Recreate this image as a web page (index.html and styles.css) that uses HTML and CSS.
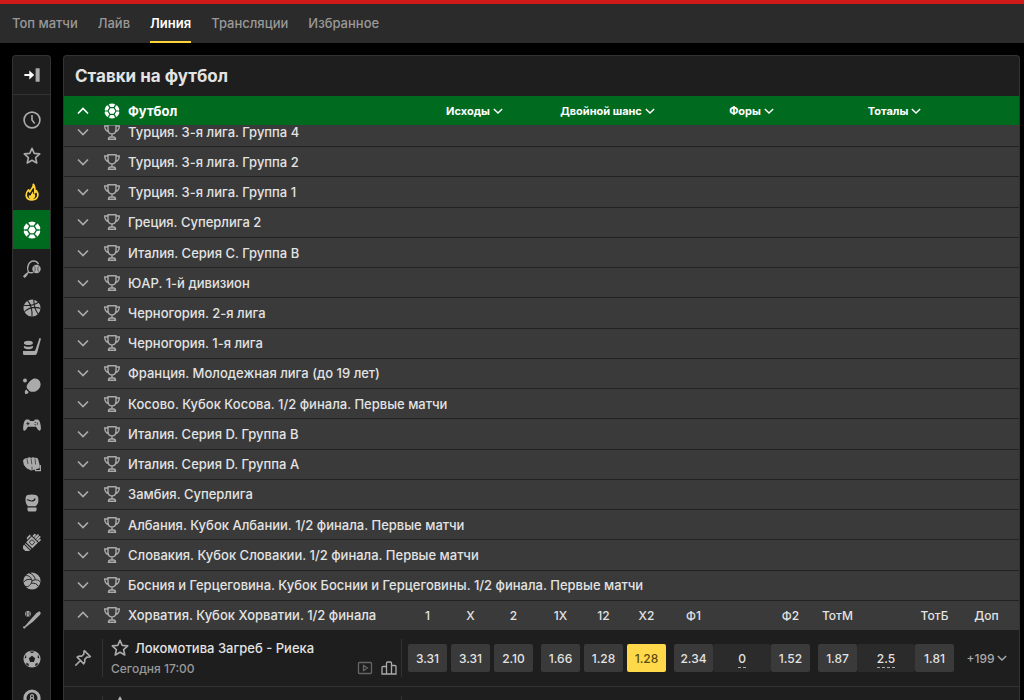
FILE: index.html
```html
<!DOCTYPE html>
<html lang="ru">
<head>
    <meta charset="UTF-8">
    <meta name="viewport" content="width=device-width, initial-scale=1.0">
    <title>Ставки на футбол</title>
    <link rel="stylesheet" href="styles.css">
</head>
<body>

<!-- Icons -->
<svg class="sprite" aria-hidden="true">
    <symbol id="down" viewBox="0 0 12 12"><path d="M1 3.500l5 5 5-5" fill="none" stroke="currentColor" stroke-width="1.700"/></symbol>
    <symbol id="up" viewBox="0 0 12 12"><path d="M1 8.500l5-5 5 5" fill="none" stroke="currentColor" stroke-width="1.700"/></symbol>
    <symbol id="cup" viewBox="0 0 16 16">
        <path d="M4 .8h8v4.500c0 2.800-1.500 4.700-4 4.700S4 8.100 4 5.300zM4 2H.7c0 3 1 4.800 3.800 5.500M12 2h3.300c0 3-1 4.800-3.800 5.500M8 10v3M4.500 15.300c0-1.600.8-2.300 2-2.300h3c1.200 0 2 .7 2 2.300z" fill="none" stroke="currentColor" stroke-width="1.400"/>
    </symbol>
    <symbol id="star" viewBox="0 0 20 20"><path d="M10 1.500l2.500 5.600 6.100.6-4.600 4.100 1.300 6L10 14.700l-5.300 3.100 1.300-6-4.600-4.100 6.100-.6z" fill="none" stroke="currentColor" stroke-width="1.800" stroke-linejoin="round"/></symbol>
    <symbol id="ball" viewBox="0 0 20 20">
        <circle cx="10" cy="10" r="9.500" fill="#fff"/>
        <path d="M7.500 5.700h5L15 10l-2.500 4.300h-5L5 10zM7.500 5.700L5.800 3M12.500 5.700L14.200 3M15 10h3M12.500 14.300l1.700 2.700M7.500 14.300L5.800 17M5 10H2" fill="none" stroke="#006b1f" stroke-width="1.500"/>
        <path d="M4 1l3 1-2 2.500zM16 1l-3 1 2 2.500zM20 8l-2.300 2 2.300 2zM16 19l-3-1 2-2.500zM4 19l3-1-2-2.500zM0 8l2.300 2L0 12z" fill="#006b1f"/>
    </symbol>
    <symbol id="collapse" viewBox="0 0 20 20">
        <path d="M1.500 8.800h5.500V5l5.500 5L7 15v-3.800H1.500z" fill="#fff"/><path d="M14 2.500h4.500v15H14z" fill="#aaa"/>
    </symbol>
    <symbol id="clock" viewBox="0 0 20 20"><g fill="none" stroke="currentColor" stroke-width="1.800"><circle cx="10" cy="10" r="8.800"/><path d="M10 4.500V10l3 3.800"/></g></symbol>
    <symbol id="fire" viewBox="0 0 20 20">
        <path d="M11.500 1.500c.5 3-1.500 4.300-2.800 6.200-.7 1-1 1.600-1.100 2.300C6.700 9.300 6.300 8.500 6.200 7.500 4.300 9.500 3.200 11.300 3.500 13.700c.4 3 3 5 6.500 5s6.300-2 6.500-5.300c.1-2-.8-3.700-1.800-5-.3 1.200-.8 2-1.700 2.600.5-3.800.5-6.800-1.500-9.500z" fill="none" stroke="currentColor" stroke-width="1.900" stroke-linejoin="round"/>
        <path d="M11 9.500c0 2 .4 2.800 2.300 3 .8 3-.8 5.500-3.300 5.500-2.800 0-4.200-2-3.500-4.500.9.600 1.600.4 2.200-.3.700-1 1.200-2.700 2.300-3.700z" fill="currentColor"/>
    </symbol>
    <symbol id="tennis" viewBox="0 0 20 20">
        <path d="M6 13.500C3.500 8 6.500 1.500 11.500 1.200c3-.1 4.800 1.300 5.600 3.600M6 13.500c2 1 3.500 1 5.500.3M6 13.500L1 19" fill="none" stroke="currentColor" stroke-width="1.600"/><path d="M0 18l3.500-3.500 1.800 1.800L2 20z" fill="currentColor"/>
        <circle cx="15" cy="10" r="4.700" fill="currentColor"/><path d="M12.500 7c1.500 2 1.500 4 0 6M17.500 7c-1.500 2-1.500 4 0 6" fill="none" stroke="#1e1e1e" stroke-width=".6"/>
    </symbol>
    <symbol id="basket" viewBox="0 0 20 20">
        <circle cx="10" cy="10" r="9.500" fill="currentColor"/>
        <path d="M5 1.500c4 5 5.500 11 5 18M1 7c7 .8 13-.5 17-4M1.500 14C7 9.500 13 8 19.500 10.500M12 .8C12 7 14 13 17 17" fill="none" stroke="#1e1e1e" stroke-width="1.200"/>
    </symbol>
    <symbol id="hockey" viewBox="0 0 20 20">
        <path d="M18.300 0l1.700.5-4.200 15.800c-.4 1.700-1.300 2.700-3.300 2.700H1.500C.6 19 0 18.400 0 17.500V14.500h11.500c1.300 0 2-.5 2.500-1.700z" fill="currentColor"/>
        <path d="M1 5.500C1 4 3 3 6 3s5 1 5 2.500-2 2.300-5 2.300-5-.8-5-2.300zM1 8.500c2.500 1.500 7.500 1.500 10 0v2c-.5 1.300-2.500 2-5 2s-4.500-.7-5-2z" fill="currentColor"/>
    </symbol>
    <symbol id="pingpong" viewBox="0 0 20 20">
        <path d="M8.500 4C12 .5 16.500 1.300 18.500 4.500c2 3.500 1 7.500-2 10-2.500 2.200-5 2.200-7.500 1.800-1.500-.2-2.200-1.500-3.300-2.500S3.500 11.500 4.300 9.500C5.200 7.500 6.500 5.800 8.500 4z" fill="currentColor"/>
        <circle cx="2.200" cy="3.800" r="2.200" fill="currentColor"/><path d="M3.500 14l2.800 2.800c-.5 1.700-2 2.700-3.700 2-1-1-.8-3.500.9-4.800z" fill="currentColor"/>
    </symbol>
    <symbol id="gamepad" viewBox="0 0 20 20">
        <path d="M4 4h2.800l1 1.500h4.400l1-1.500H16c1.700 0 2.600 1.800 3.300 5 .8 3.500 1 7-.7 7.300-1.500.3-2.500-1.800-4-4.300H5.400c-1.500 2.500-2.500 4.600-4 4.300C-.3 16 0 12.500.7 9 1.400 5.800 2.300 4 4 4z" fill="currentColor"/>
        <path d="M5.500 6.700v3.600M3.700 8.500h3.600" stroke="#1e1e1e" stroke-width="1"/><circle cx="14.500" cy="8.500" r="1.700" fill="none" stroke="#1e1e1e" stroke-width="1" stroke-dasharray="1.500 1.200"/>
    </symbol>
    <symbol id="fist" viewBox="0 0 20 20">
        <path d="M0 6.500C1 4 3 3 4.500 4 6 2.300 8 2.300 9 3.300c1.500-1.300 3.500-1 4.300 0 2-.6 3.300.2 3.700 2L18.500 11v3.500l-3.500 1.200-6 1.500-5-2.500L1 11z" fill="currentColor"/>
        <path d="M4.500 4.500L5.500 10M9 3.800l.8 6.500M13.300 4l.7 6.500M10 13v3.500" fill="none" stroke="#1e1e1e" stroke-width=".7"/>
        <path d="M19.300 11v6.300H14l-.5-1.500" fill="none" stroke="currentColor" stroke-width="1.300"/>
    </symbol>
    <symbol id="boxing" viewBox="0 0 20 20">
        <path d="M5 1.200C8 .3 12 .3 15 1.500c2 1 2.300 4 2 7-.3 2-1.500 3.800-2.800 5H5.500C3.500 11.500 2.700 9 2.800 6c0-2.500.7-4.200 2.200-4.800zM5 15h10v3c-.3 1-1 1.500-2 1.500H7c-1 0-1.700-.5-2-1.500z" fill="currentColor"/>
        <path d="M4.500 6.500c1.500-.5 2.500 1.300 5 1.300S13 7 13.500 5" fill="none" stroke="#1e1e1e" stroke-width="1.300"/>
    </symbol>
    <symbol id="glove" viewBox="0 0 20 20">
        <g fill="currentColor" transform="rotate(45 10 10)">
            <path d="M6 16h9v1.300H6zM6 18.300h9v4H6zM5.500 6h9.800v8.700H5.500z"/><rect x="5.500" y="1" width="2.200" height="4" rx="1"/><rect x="8.200" y="-1" width="2.200" height="6" rx="1"/><rect x="10.900" y="-1" width="2.200" height="6" rx="1"/><rect x="13.500" y="1" width="2" height="4" rx="1"/><path d="M2.500 5.500l2 1v6l-2-2z"/>
        </g>
        <rect x="8" y="8" width="4.500" height="4.500" rx="1" fill="none" stroke="#1e1e1e" stroke-width="1" transform="rotate(45 10 10)"/>
    </symbol>
    <symbol id="volley" viewBox="0 0 20 20">
        <circle cx="10" cy="10" r="9.500" fill="currentColor"/>
        <path d="M10 10C9.500 6 6.500 3.500 2.500 4M10 10c3-2 7-2 9.500 1.500M10 10c-1 4-4 7.500-8 6M7 1c4 1.500 6.500 4.500 6.500 7.500M17 16c-1.500-3-4-4-7.800-3.500M1 11c2-2.500 5-3.300 8.300-2.700" fill="none" stroke="#1e1e1e" stroke-width="1.100"/>
    </symbol>
    <symbol id="baseball" viewBox="0 0 20 20">
        <path d="M17.200.8c1.500-.6 3 .8 2.200 2.500-.5 1-1.400 2-2.400 2.900L11 12l-8.300 6.300c.1 1-.9 1.700-1.700 1.200-1-.5-1.300-1.800-.5-2.300.5-.4.800-.3 1.200-.1L8.500 9.500l5.200-6c1-1.200 2.200-2.200 3.500-2.700z" fill="currentColor"/>
        <circle cx="5.500" cy="3" r="3.200" fill="currentColor"/><path d="M3.500.5c1 1.500 1 3.500 0 5M7.500.5c-1 1.500-1 3.500 0 5" fill="none" stroke="#1e1e1e" stroke-width=".9"/>
    </symbol>
    <symbol id="soccer" viewBox="0 0 20 20">
        <circle cx="10" cy="10" r="9.500" fill="currentColor"/>
        <path d="M10 6.500l3.500 2.600-1.300 4.200H7.800L6.500 9.100zM7 1.800h6l-3 1.800zM16.800 5l1.500 4.500-2.100-1zM3.200 5L1.700 9.500l2.100-1zM16.500 16l-3 2 .3-2.700 2.200-1zM3.500 16l3 2-.3-2.700-2.200-1z" fill="#1e1e1e"/>
    </symbol>
    <symbol id="pool" viewBox="0 0 20 20">
        <g fill="none" stroke="currentColor"><circle cx="10" cy="10" r="7.800" stroke-width="3.500"/><circle cx="10" cy="8" r="1.700" stroke-width="1.300"/><circle cx="10" cy="11.800" r="2" stroke-width="1.300"/></g>
    </symbol>
    <symbol id="pin" viewBox="0 0 20 20"><path d="M11.500 1.800l6.700 6.700c-1.500.8-2.700.8-3.800.5l-2.500 2.500c.5 2 .2 3.500-1 5L3.500 9.100c1.500-1.200 3-1.500 5-1L11 5.600c-.3-1.100-.3-2.300.5-3.800zM7.200 12.800L1.500 18.500" fill="none" stroke="currentColor" stroke-width="1.800" stroke-linejoin="round"/></symbol>
    <symbol id="play" viewBox="0 0 16 16"><path d="M2.500 2.500h11c.6 0 1 .4 1 1v9c0 .6-.4 1-1 1h-11c-.6 0-1-.4-1-1v-9c0-.6.4-1 1-1zM6.500 5.500v5l4-2.500z" fill="none" stroke="currentColor" stroke-width="1.300"/></symbol>
    <symbol id="stats" viewBox="0 0 16 16"><path d="M1 14V7.500c0-.6.4-1 1-1h3.500V14zM5.500 14V3c0-.6.4-1 1-1h3c.6 0 1 .4 1 1v11zM10.500 14V5.500H14c.6 0 1 .4 1 1V14z" fill="none" stroke="currentColor" stroke-width="1.300"/></symbol>
</svg>

<header class="topbar">
    <nav class="tabs">
        <a href="#">Топ матчи</a>
        <a href="#">Лайв</a>
        <a href="#" class="active">Линия</a>
        <a href="#">Трансляции</a>
        <a href="#">Избранное</a>
    </nav>
</header>

<div class="layout">
    <aside class="sidebar">
        <button class="collapse" type="button" aria-label="Свернуть"><svg><use href="#collapse"/></svg></button>
        <nav class="quick">
            <a href="#" aria-label="Время"><svg><use href="#clock"/></svg></a>
            <a href="#" aria-label="Избранное"><svg><use href="#star"/></svg></a>
            <a href="#" class="hot" aria-label="Горячее"><svg><use href="#fire"/></svg></a>
        </nav>
        <nav class="sports">
            <a href="#" class="active" aria-label="Футбол"><svg><use href="#ball"/></svg></a>
            <a href="#" aria-label="Теннис"><svg><use href="#tennis"/></svg></a>
            <a href="#" aria-label="Баскетбол"><svg><use href="#basket"/></svg></a>
            <a href="#" aria-label="Хоккей"><svg><use href="#hockey"/></svg></a>
            <a href="#" aria-label="Настольный теннис"><svg><use href="#pingpong"/></svg></a>
            <a href="#" aria-label="Киберспорт"><svg><use href="#gamepad"/></svg></a>
            <a href="#" aria-label="Единоборства"><svg><use href="#fist"/></svg></a>
            <a href="#" aria-label="Бокс"><svg><use href="#boxing"/></svg></a>
            <a href="#" aria-label="Гандбол"><svg><use href="#glove"/></svg></a>
            <a href="#" aria-label="Волейбол"><svg><use href="#volley"/></svg></a>
            <a href="#" aria-label="Бейсбол"><svg><use href="#baseball"/></svg></a>
            <a href="#" aria-label="Футзал"><svg><use href="#soccer"/></svg></a>
            <a href="#" aria-label="Бильярд"><svg><use href="#pool"/></svg></a>
        </nav>
    </aside>

    <main class="panel">
        <h1>Ставки на футбол</h1>
        <div class="sport-head">
            <button class="sport-name" type="button"><svg class="arrow"><use href="#up"/></svg><svg class="icon"><use href="#ball"/></svg>Футбол</button>
            <div class="markets">
                <button type="button">Исходы<svg><use href="#down"/></svg></button>
                <button type="button">Двойной шанс<svg><use href="#down"/></svg></button>
                <button type="button">Форы<svg><use href="#down"/></svg></button>
                <button type="button">Тоталы<svg><use href="#down"/></svg></button>
            </div>
        </div>

        <div class="leagues">
            <button class="league" type="button"><svg class="arrow"><use href="#down"/></svg><svg class="icon"><use href="#cup"/></svg>Турция. 3-я лига. Группа 4</button>
            <button class="league" type="button"><svg class="arrow"><use href="#down"/></svg><svg class="icon"><use href="#cup"/></svg>Турция. 3-я лига. Группа 2</button>
            <button class="league" type="button"><svg class="arrow"><use href="#down"/></svg><svg class="icon"><use href="#cup"/></svg>Турция. 3-я лига. Группа 1</button>
            <button class="league" type="button"><svg class="arrow"><use href="#down"/></svg><svg class="icon"><use href="#cup"/></svg>Греция. Суперлига 2</button>
            <button class="league" type="button"><svg class="arrow"><use href="#down"/></svg><svg class="icon"><use href="#cup"/></svg>Италия. Серия C. Группа B</button>
            <button class="league" type="button"><svg class="arrow"><use href="#down"/></svg><svg class="icon"><use href="#cup"/></svg>ЮАР. 1-й дивизион</button>
            <button class="league" type="button"><svg class="arrow"><use href="#down"/></svg><svg class="icon"><use href="#cup"/></svg>Черногория. 2-я лига</button>
            <button class="league" type="button"><svg class="arrow"><use href="#down"/></svg><svg class="icon"><use href="#cup"/></svg>Черногория. 1-я лига</button>
            <button class="league" type="button"><svg class="arrow"><use href="#down"/></svg><svg class="icon"><use href="#cup"/></svg>Франция. Молодежная лига (до 19 лет)</button>
            <button class="league" type="button"><svg class="arrow"><use href="#down"/></svg><svg class="icon"><use href="#cup"/></svg>Косово. Кубок Косова. 1/2 финала. Первые матчи</button>
            <button class="league" type="button"><svg class="arrow"><use href="#down"/></svg><svg class="icon"><use href="#cup"/></svg>Италия. Серия D. Группа B</button>
            <button class="league" type="button"><svg class="arrow"><use href="#down"/></svg><svg class="icon"><use href="#cup"/></svg>Италия. Серия D. Группа A</button>
            <button class="league" type="button"><svg class="arrow"><use href="#down"/></svg><svg class="icon"><use href="#cup"/></svg>Замбия. Суперлига</button>
            <button class="league" type="button"><svg class="arrow"><use href="#down"/></svg><svg class="icon"><use href="#cup"/></svg>Албания. Кубок Албании. 1/2 финала. Первые матчи</button>
            <button class="league" type="button"><svg class="arrow"><use href="#down"/></svg><svg class="icon"><use href="#cup"/></svg>Словакия. Кубок Словакии. 1/2 финала. Первые матчи</button>
            <button class="league" type="button"><svg class="arrow"><use href="#down"/></svg><svg class="icon"><use href="#cup"/></svg>Босния и Герцеговина. Кубок Боснии и Герцеговины. 1/2 финала. Первые матчи</button>
            <div class="league-open">
                <button class="league" type="button"><svg class="arrow"><use href="#up"/></svg><svg class="icon"><use href="#cup"/></svg>Хорватия. Кубок Хорватии. 1/2 финала</button>
                <div class="odds labels">
                    <div class="three"><span>1</span><span>X</span><span>2</span></div>
                    <div class="three"><span>1X</span><span>12</span><span>X2</span></div>
                    <div class="line"><span>Ф1</span><span></span><span>Ф2</span></div>
                    <div class="line"><span>ТотМ</span><span></span><span>ТотБ</span></div>
                    <span class="more">Доп</span>
                </div>
            </div>
        </div>

        <div class="match">
            <button class="pin" type="button" aria-label="Закрепить"><svg><use href="#pin"/></svg></button>
            <div class="info">
                <div class="teams"><button type="button" aria-label="В избранное"><svg><use href="#star"/></svg></button><a href="#">Локомотива Загреб - Риека</a></div>
                <div class="meta"><span>Сегодня 17:00</span><svg class="play"><use href="#play"/></svg><svg><use href="#stats"/></svg></div>
            </div>
            <div class="odds">
                <div class="three"><button type="button">3.31</button><button type="button">3.31</button><button type="button">2.10</button></div>
                <div class="three"><button type="button">1.66</button><button type="button">1.28</button><button type="button" class="picked">1.28</button></div>
                <div class="line"><button type="button">2.34</button><button type="button" class="value"><span>0</span></button><button type="button">1.52</button></div>
                <div class="line"><button type="button">1.87</button><button type="button" class="value"><span>2.5</span></button><button type="button">1.81</button></div>
                <button class="more" type="button">+199<svg><use href="#down"/></svg></button>
            </div>
        </div>
        <div class="next">
            <div class="match">
                <div class="pin"></div>
                <div class="info">
                    <div class="teams"><button type="button" aria-label="В избранное"><svg><use href="#star"/></svg></button></div>
                    <div class="meta"></div>
                </div>
                <div class="odds">
                    <div class="three"></div>
                    <div class="three"></div>
                    <div class="line"></div>
                    <div class="line"></div>
                    <div class="more"></div>
                </div>
            </div>
        </div>
    </main>
</div>

</body>
</html>
```
FILE: styles.css
```css
* {
    box-sizing: border-box;
}
body {
    margin: 0;
    height: 100vh;
    display: flex;
    flex-direction: column;
    overflow: hidden;
    background-color: #000;
    color: #e3e3e3;
    font-family: Inter, 'Open Sans', sans-serif;
    font-size: 13px;
    font-weight: 500;
}
a {
    color: inherit;
    text-decoration: none;
}
button {
    margin: 0;
    padding: 0;
    border: 0;
    background: none;
    color: inherit;
    font: inherit;
    cursor: pointer;
}
svg {
    flex: none;
    overflow: visible;
}
.sprite {
    display: none;
}

/* Top bar */
.topbar {
    flex: none;
    border-top: 4px solid #d01a1a;
    background-color: #2b2b2b;
}
.tabs {
    display: flex;
    gap: 20px;
    padding: 0 12px;
    color: #999;
}
.tabs a {
    height: 39px;
    line-height: 39px;
}
.tabs .active {
    color: #fff;
    font-weight: 600;
    box-shadow: inset 0 -2px #ffd43b;
}

.layout {
    flex: 1;
    min-height: 0;
    display: flex;
    gap: 12px;
    padding: 12px 4px 0 12px;
}

/* Sidebar */
.sidebar {
    flex: none;
    width: 39px;
    border: 1px solid #333;
    border-bottom: 0;
    border-radius: 4px 4px 0 0;
    background-color: #1e1e1e;
    color: #aaa;
    overflow: hidden;
}
.sidebar svg {
    width: 18px;
    height: 18px;
}
.collapse {
    display: flex;
    align-items: center;
    justify-content: center;
    width: 100%;
    height: 39px;
    border-bottom: 1px solid #333;
}
.quick {
    padding-top: 7px;
}
.quick a, .sports a {
    display: flex;
    align-items: center;
    justify-content: center;
    height: 36px;
}
.sports a {
    height: 39px;
}
.sports .active {
    background-color: #006b1f;
}
.hot {
    color: #ffd43b;
}

/* Betting panel */
.panel {
    flex: 1;
    min-width: 0;
    display: flex;
    flex-direction: column;
    border: 1px solid #333;
    border-bottom: 0;
    border-radius: 4px 4px 0 0;
    background-color: #1e1e1e;
    overflow: hidden;
}
h1 {
    flex: none;
    margin: 0;
    padding: 0 11px;
    font-size: 17px;
    font-weight: 700;
    line-height: 40px;
}
.sport-head {
    flex: none;
    position: relative;
    z-index: 1;
    display: flex;
    height: 29px;
    background-color: #006b1f;
    color: #fff;
}
.sport-name, .league {
    flex: 1;
    min-width: 0;
    display: flex;
    align-items: center;
    padding-left: 13px;
    text-align: left;
    white-space: nowrap;
}
.sport-name {
    font-weight: 700;
}
.arrow {
    width: 12px;
    height: 12px;
    margin-right: 15px;
}
.icon {
    width: 16px;
    height: 16px;
    margin-right: 8px;
}
.markets {
    flex: none;
    display: grid;
    grid-template-columns: 133px 133px 155px 131px;
    padding-right: 59px;
    font-size: 11px;
    font-weight: 700;
}
.markets button {
    display: flex;
    align-items: center;
    justify-content: center;
    gap: 3px;
}
.markets svg, .more svg {
    width: 10px;
    height: 10px;
}

/* The list starts under the sport header */
.leagues {
    flex: 1;
    display: flex;
    flex-direction: column;
    margin-top: -8px;
}
.leagues > .league, .league-open {
    flex: 1;
    border-bottom: 1px solid #222;
    background-color: #3a3a3a;
}
.league-open {
    display: flex;
    border-bottom: 0;
}
.league .arrow, .league .icon {
    color: #aaa;
}

/* Odds columns */
.odds {
    flex: none;
    display: flex;
    align-items: center;
    gap: 8px;
    font-size: 12px;
    text-align: center;
}
.three {
    display: grid;
    grid-template-columns: 39px 39px 39px;
    gap: 4px;
}
.line {
    display: grid;
    grid-template-columns: 39px 58px 39px;
}
.odds .more {
    width: 65px;
    margin-left: -8px;
}
.match .odds .more {
    display: flex;
    align-items: center;
    justify-content: center;
    gap: 2px;
    color: #aaa;
}
.match .three button, .match .line button {
    height: 28px;
    border-radius: 2px;
    background-color: #3a3a3a;
}
.match .line .value {
    background-color: #2b2b2b;
}
.value span {
    border-bottom: 1px dashed #aaa;
    padding-bottom: 1px;
}
.match .three .picked {
    background-color: #ffd94a;
    color: #5a4b14;
}

/* Match row */
.match {
    flex: none;
    display: flex;
    height: 57px;
    border-bottom: 1px solid #333;
}
.pin {
    flex: none;
    width: 38px;
    color: #aaa;
}
.pin svg {
    width: 18px;
    height: 18px;
    vertical-align: middle;
}
.info {
    flex: 1;
    min-width: 0;
    display: flex;
    flex-direction: column;
    justify-content: center;
    gap: 2px;
    margin: 9px 6px 9px 0;
    padding: 0 4px 0 8px;
    border: solid #333;
    border-width: 0 1px;
}
.teams, .meta {
    display: flex;
    align-items: center;
    height: 19px;
    white-space: nowrap;
}
.teams button {
    display: flex;
    margin-right: 6px;
    color: #aaa;
}
.teams svg {
    width: 18px;
    height: 18px;
}
.meta {
    gap: 8px;
    color: #999;
    font-size: 12px;
}
.meta span {
    flex: 1;
}
.meta svg {
    width: 16px;
    height: 16px;
    color: #aaa;
}
.meta .play {
    color: #666;
}
.next {
    flex: none;
    height: 13px;
    overflow: hidden;
}
```
